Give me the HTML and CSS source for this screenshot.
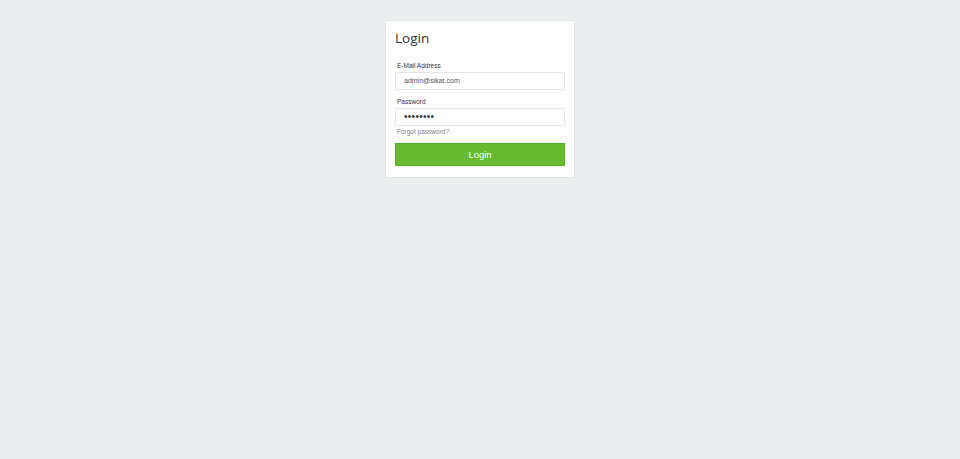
FILE: index.html
```html
<!DOCTYPE html>
<html>
<head>
<meta charset="utf-8">
<title>Login</title>
<link rel="stylesheet" href="styles.css">
</head>
<body>
<div class="page">
  <div class="card">
    <h1 class="title">Login</h1>
    <form class="form">
      <div class="field">
        <label class="label">E-Mail Address</label>
        <div class="input">admin@sikat.com</div>
      </div>
      <div class="field">
        <label class="label">Password</label>
        <div class="input dots">••••••••</div>
      </div>
      <a class="forgot">Forgot password?</a>
      <div class="button">Login</div>
    </form>
  </div>
</div>
</body>
</html>
```
FILE: styles.css
```css
html, body {
  margin: 0;
  padding: 0;
  background: #ebeeef;
  height: 100%;
}
.page {
  display: flex;
  justify-content: center;
  padding-top: 20px;
  font-family: "Liberation Sans", Arial, sans-serif;
}
.card {
  width: 170px;
  background: #ffffff;
  border: 1px solid #e2e5e6;
  padding: 7px 9px 11px 9px;
}
.title {
  margin: 0;
  font-family: "Open Sans", sans-serif;
  font-weight: 400;
  font-size: 13.5px;
  line-height: 20px;
  color: #333333;
}
.form {
  display: flex;
  flex-direction: column;
  margin-top: 13px;
}
.field {
  display: flex;
  flex-direction: column;
  margin-bottom: 7px;
}
.label {
  font-size: 6.5px;
  line-height: 9px;
  color: #333333;
  padding-left: 2px;
  margin-bottom: 2px;
}
.input {
  height: 16px;
  border: 1px solid #e4e6e7;
  border-radius: 1px;
  padding-left: 8px;
  font-size: 7px;
  line-height: 16px;
  color: #555555;
}
.dots {
  font-size: 10px;
  letter-spacing: 0.3px;
  color: #333333;
}
.forgot {
  font-size: 6.5px;
  line-height: 9px;
  color: #808080;
  padding-left: 2px;
  margin-top: -6px;
  margin-bottom: 7px;
}
.button {
  height: 21px;
  background: #66bb2f;
  border: 1px solid #5aaa28;
  color: #ffffff;
  font-size: 9.5px;
  line-height: 21px;
  text-align: center;
}
```
